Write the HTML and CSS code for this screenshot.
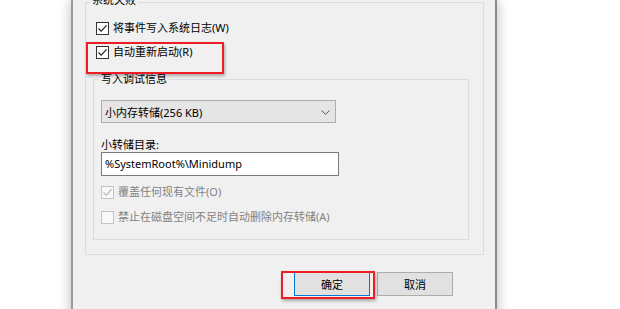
FILE: index.html
```html
<!DOCTYPE html>
<html lang="zh-CN">
<head>
<meta charset="utf-8">
<title>系统失败</title>
<link rel="stylesheet" href="styles.css">
</head>
<body>
<div class="stage">
  <div class="window">
    <div class="group outer">
      <span class="legend outer-legend">系统失败</span>
      <label class="check row1">
        <span class="box"><svg viewBox="0 0 11 11" width="11" height="11"><path d="M1.5 5.5 L4.2 8.2 L9.6 2.4" fill="none" stroke="#222" stroke-width="1.2"/></svg></span>
        <span class="ctext">将事件写入系统日志(W)</span>
      </label>
      <label class="check row2">
        <span class="box"><svg viewBox="0 0 11 11" width="11" height="11"><path d="M1.5 5.5 L4.2 8.2 L9.6 2.4" fill="none" stroke="#222" stroke-width="1.2"/></svg></span>
        <span class="ctext">自动重新启动(R)</span>
      </label>
      <div class="group inner">
        <span class="legend inner-legend">写入调试信息</span>
        <div class="select">
          <span>小内存转储(256 KB)</span>
          <svg class="chev" viewBox="0 0 9 5" width="9" height="5"><path d="M0.5 0.5 L4.5 4.3 L8.5 0.5" fill="none" stroke="#555" stroke-width="1"/></svg>
        </div>
        <div class="field-label">小转储目录:</div>
        <div class="input">%SystemRoot%\Minidump</div>
        <label class="check disabled row3">
          <span class="box"><svg viewBox="0 0 11 11" width="11" height="11"><path d="M1.5 5.5 L4.2 8.2 L9.6 2.4" fill="none" stroke="#b8b8b8" stroke-width="1.2"/></svg></span>
          <span class="ctext">覆盖任何现有文件(O)</span>
        </label>
        <label class="check disabled row4">
          <span class="box"></span>
          <span class="ctext">禁止在磁盘空间不足时自动删除内存转储(A)</span>
        </label>
      </div>
    </div>
    <div class="buttons">
      <button class="btn primary">确定</button>
      <button class="btn">取消</button>
    </div>
    <div class="highlight hl-restart"></div>
    <div class="highlight hl-ok"></div>
  </div>
</div>
</body>
</html>
```

FILE: styles.css
```css
html, body {
  margin: 0;
  padding: 0;
  background: #ffffff;
}
body {
  width: 620px;
  height: 309px;
  overflow: hidden;
  font-family: "Noto Sans", "Noto Sans CJK SC", sans-serif;
  font-size: 11px;
  color: #000;
}
.stage {
  display: flex;
  height: 309px;
}
.window {
  position: relative;
  margin-left: 71px;
  width: 426px;
  height: 320px;
  box-sizing: border-box;
  background: #f0f0f0;
  border-left: 2px solid #9a9a9a;
  border-right: 2px solid #8a8a8a;
  box-shadow: 0 0 12px rgba(0, 0, 0, 0.28);
  display: flex;
  flex-direction: column;
  align-items: flex-start;
}
.group {
  box-sizing: border-box;
  border: 1px solid #dcdcdc;
  display: flex;
  flex-direction: column;
  align-items: flex-start;
}
.outer {
  margin-left: 12px;
  margin-top: 2px;
  width: 399px;
  height: 253px;
}
.inner {
  margin-left: 7px;
  margin-top: 19px;
  width: 376px;
  height: 161px;
}
.legend {
  background: #f0f0f0;
  padding: 0 2px;
  line-height: 16px;
  height: 16px;
}
.outer-legend {
  margin-top: -11px;
  margin-left: 4px;
}
.inner-legend {
  margin-top: -9px;
  margin-left: 5px;
}
.check {
  display: flex;
  align-items: center;
  height: 16px;
  line-height: 16px;
  gap: 4px;
}
.box {
  box-sizing: border-box;
  width: 13px;
  height: 13px;
  border: 1px solid #333;
  background: #fff;
  display: flex;
  align-items: center;
  justify-content: center;
}
.row1 { margin-left: 10px; margin-top: 12px; }
.row2 { margin-left: 10px; margin-top: 8px; }
.row3 { margin-left: 7px; margin-top: 8px; }
.row4 { margin-left: 7px; margin-top: 9px; }
.disabled { color: #838383; }
.disabled .box { border-color: #c4c4c4; background: #f8f8f8; }
.select {
  box-sizing: border-box;
  margin-left: 7px;
  margin-top: 13px;
  width: 235px;
  height: 23px;
  background: #e5e5e5;
  border: 1px solid #acacac;
  display: flex;
  align-items: center;
  justify-content: space-between;
  padding: 0 5px 0 3px;
}
.chev { margin-top: 1px; }
.field-label {
  margin-left: 7px;
  margin-top: 15px;
  line-height: 14px;
  height: 14px;
}
.input {
  box-sizing: border-box;
  margin-left: 7px;
  margin-top: 0;
  width: 238px;
  height: 24px;
  background: #fff;
  border: 1px solid #7a7a7a;
  line-height: 22px;
  padding-left: 3px;
}
.buttons {
  display: flex;
  gap: 7px;
  margin-left: 221px;
  margin-top: 17px;
}
.btn {
  box-sizing: border-box;
  width: 76px;
  height: 24px;
  background: #e1e1e1;
  border: 1px solid #adadad;
  font-family: "Noto Sans", "Noto Sans CJK SC", sans-serif;
  font-size: 11px;
  color: #000;
  padding: 0;
}
.btn.primary {
  border: 1px solid #0078d7;
  box-shadow: inset 0 0 0 1px #e1e1e1;
}
.highlight {
  position: absolute;
  box-sizing: border-box;
  border: 2px solid #ee1c24;
  box-shadow: 1px 2px 3px rgba(0, 0, 0, 0.3);
}
.hl-restart {
  left: 13px;
  top: 42px;
  width: 138px;
  height: 32px;
}
.hl-ok {
  left: 208px;
  top: 271px;
  width: 94px;
  height: 28px;
}
```
